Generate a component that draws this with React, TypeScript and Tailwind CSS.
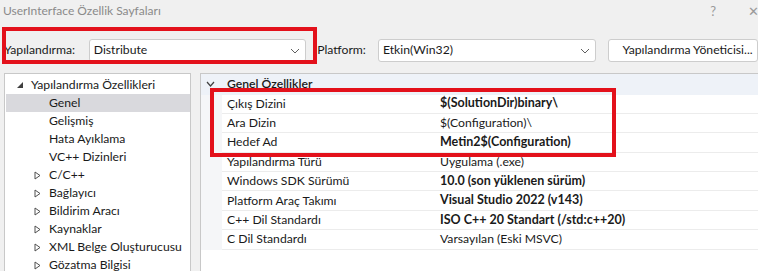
import React from "react";

const treeItems = [
  { label: "Genel", arrow: false, selected: true },
  { label: "Gelişmiş", arrow: false },
  { label: "Hata Ayıklama", arrow: false },
  { label: "VC++ Dizinleri", arrow: false },
  { label: "C/C++", arrow: true },
  { label: "Bağlayıcı", arrow: true },
  { label: "Bildirim Aracı", arrow: true },
  { label: "Kaynaklar", arrow: true },
  { label: "XML Belge Oluşturucusu", arrow: true },
  { label: "Gözatma Bilgisi", arrow: true },
];

const props = [
  { name: "Çıkış Dizini", value: "$(SolutionDir)binary\\", bold: true },
  { name: "Ara Dizin", value: "$(Configuration)\\", bold: false },
  { name: "Hedef Ad", value: "Metin2$(Configuration)", bold: true },
  { name: "Yapılandırma Türü", value: "Uygulama (.exe)", bold: false },
  { name: "Windows SDK Sürümü", value: "10.0 (son yüklenen sürüm)", bold: true },
  { name: "Platform Araç Takımı", value: "Visual Studio 2022 (v143)", bold: true },
  { name: "C++ Dil Standardı", value: "ISO C++ 20 Standart (/std:c++20)", bold: true },
  { name: "C Dil Standardı", value: "Varsayılan (Eski MSVC)", bold: false },
];

function Chevron() {
  return (
    <svg width="10" height="6" viewBox="0 0 10 6" className="shrink-0">
      <path d="M1 1 L5 5 L9 1" fill="none" stroke="#606060" strokeWidth="1" />
    </svg>
  );
}

function Combo({ text, width }: { text: string; width: string }) {
  return (
    <div
      className={`${width} h-[23px] bg-white border border-[#cdcdcd] rounded-[3px] flex items-center justify-between pl-[4px] pr-[5px] text-[#1a1a1a]`}
    >
      <span>{text}</span>
      <Chevron />
    </div>
  );
}

export default function App() {
  return (
    <div className="relative w-[758px] h-[271px] overflow-hidden bg-[#f0f0f0] text-[12.2px] leading-none font-['Segoe_UI','Lato',sans-serif]">
      {/* Title bar */}
      <div className="h-[22px] flex items-center justify-between pl-[3px] pr-0">
        <span className="text-[#8a8a8a] text-[12px]">UserInterface Özellik Sayfaları</span>
        <div className="flex items-center gap-[32px] text-[#9a9a9a] text-[13px]">
          <span>?</span>
          <span className="w-[10px]">✕</span>
        </div>
      </div>

      {/* Toolbar */}
      <div className="mt-[17px] h-[23px] flex items-center pl-[4px]">
        <span className="w-[85px] text-[#1a1a1a]">Yapılandırma:</span>
        <Combo text="Distribute" width="w-[218px]" />
        <span className="ml-[11px] w-[61px] text-[#1a1a1a]">Platform:</span>
        <Combo text="Etkin(Win32)" width="w-[219px]" />
        <div className="ml-[12px] w-[150px] h-[23px] bg-white border border-[#cdcdcd] rounded-[3px] flex items-center pl-[13px] text-[#1a1a1a] whitespace-nowrap">
          Yapılandırma Yöneticisi...
        </div>
      </div>

      {/* Main area */}
      <div className="mt-[11px] flex h-[200px]">
        {/* Tree */}
        <div className="ml-[4px] w-[187px] bg-white border border-[#c8c8c8] pt-[2px] pl-[1px]">
          <div className="h-[18px] flex items-center text-[#1a1a1a]">
            <svg width="8" height="8" viewBox="0 0 8 8" className="ml-[10px] mr-[7px]">
              <path d="M7 1 L7 7 L1 7 Z" fill="#404040" />
            </svg>
            <span>Yapılandırma Özellikleri</span>
          </div>
          {treeItems.map((item) => (
            <div
              key={item.label}
              className={`h-[18px] flex items-center text-[#1a1a1a] ${item.selected ? "bg-[#d9d9dd]" : ""}`}
            >
              <span className="w-[43px] flex justify-start pl-[28px]">
                {item.arrow && (
                  <svg width="7" height="9" viewBox="0 0 7 9">
                    <path d="M1 1 L6 4.5 L1 8 Z" fill="none" stroke="#505050" strokeWidth="1" />
                  </svg>
                )}
              </span>
              <span>{item.label}</span>
            </div>
          ))}
        </div>

        {/* Property grid */}
        <div className="ml-[9px] flex-1 bg-white border-l border-t border-[#c8c8c8]">
          <div className="h-[20.5px] flex items-center bg-[#eef2f8] text-[#1a1a1a]">
            <svg width="9" height="6" viewBox="0 0 9 6" className="ml-[5px] mr-[12px]">
              <path d="M1 1 L4.5 5 L8 1" fill="none" stroke="#404040" strokeWidth="1.2" />
            </svg>
            <span className="font-semibold">Genel Özellikler</span>
          </div>
          {props.map((p) => (
            <div key={p.name} className="h-[19.4px] flex">
              <div className="w-[21px] bg-[#f5f6f8]" />
              <div className="flex-1 flex items-center border-b border-[#ececec] text-[#1a1a1a]">
                <span className="w-[218px] pl-[5px]">{p.name}</span>
                <span className={p.bold ? "font-bold text-[12.5px]" : ""}>{p.value}</span>
              </div>
            </div>
          ))}
        </div>
      </div>

      {/* Red annotation boxes */}
      <div className="absolute left-[2px] top-[27px] w-[315px] h-[37px] border-[4px] border-[#e3111b]" />
      <div className="absolute left-[210px] top-[88px] w-[406px] h-[69px] border-[4px] border-[#e3111b]" />
    </div>
  );
}
